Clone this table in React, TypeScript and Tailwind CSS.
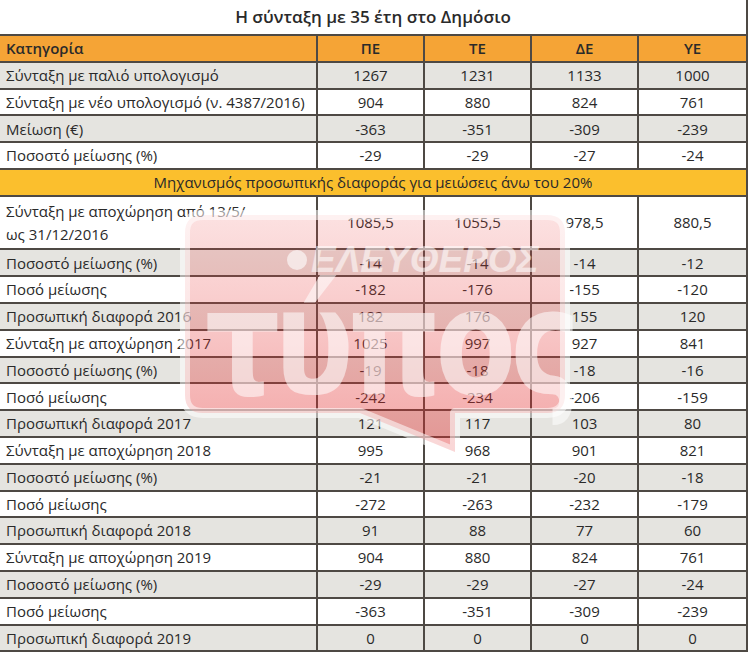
import React from "react"

type Row = {
  label: React.ReactNode
  values: string[]
  gray?: boolean
  tall?: boolean
}

const top: Row[] = [
  { label: "Σύνταξη με παλιό υπολογισμό", values: ["1267", "1231", "1133", "1000"], gray: true },
  { label: "Σύνταξη με νέο υπολογισμό (ν. 4387/2016)", values: ["904", "880", "824", "761"] },
  { label: "Μείωση (€)", values: ["-363", "-351", "-309", "-239"], gray: true },
  { label: "Ποσοστό μείωσης (%)", values: ["-29", "-29", "-27", "-24"] },
]

const bottom: Row[] = [
  {
    label: (
      <>
        Σύνταξη με αποχώρηση από 13/5/
        <br />
        ως 31/12/2016
      </>
    ),
    values: ["1085,5", "1055,5", "978,5", "880,5"],
    tall: true,
  },
  { label: "Ποσοστό μείωσης (%)", values: ["-14", "-14", "-14", "-12"], gray: true },
  { label: "Ποσό μείωσης", values: ["-182", "-176", "-155", "-120"] },
  { label: "Προσωπική διαφορά 2016", values: ["182", "176", "155", "120"], gray: true },
  { label: "Σύνταξη με αποχώρηση 2017", values: ["1025", "997", "927", "841"] },
  { label: "Ποσοστό μείωσης (%)", values: ["-19", "-18", "-18", "-16"], gray: true },
  { label: "Ποσό μείωσης", values: ["-242", "-234", "-206", "-159"] },
  { label: "Προσωπική διαφορά 2017", values: ["121", "117", "103", "80"], gray: true },
  { label: "Σύνταξη με αποχώρηση 2018", values: ["995", "968", "901", "821"] },
  { label: "Ποσοστό μείωσης (%)", values: ["-21", "-21", "-20", "-18"], gray: true },
  { label: "Ποσό μείωσης", values: ["-272", "-263", "-232", "-179"] },
  { label: "Προσωπική διαφορά 2018", values: ["91", "88", "77", "60"], gray: true },
  { label: "Σύνταξη με αποχώρηση 2019", values: ["904", "880", "824", "761"] },
  { label: "Ποσοστό μείωσης (%)", values: ["-29", "-29", "-27", "-24"], gray: true },
  { label: "Ποσό μείωσης", values: ["-363", "-351", "-309", "-239"] },
  { label: "Προσωπική διαφορά 2019", values: ["0", "0", "0", "0"], gray: true },
]

function DataRow({ row }: { row: Row }) {
  return (
    <div
      className={`grid grid-cols-[318px_107px_107px_107px_1fr] border-b-2 border-[#4e4944] ${
        row.tall ? "h-[53.6px]" : "h-[26.8px]"
      } ${row.gray ? "bg-[#e5e4e0]" : "bg-white"}`}
    >
      <div
        className={`border-r-2 border-[#4e4944] pl-[6px] ${
          row.tall ? "pt-[3px] leading-[23px]" : "flex items-center"
        }`}
      >
        {row.label}
      </div>
      {row.values.map((v, i) => (
        <div
          key={i}
          className={`flex items-center justify-center ${
            i < 3 ? "border-r-2 border-[#4e4944]" : ""
          }`}
        >
          {v}
        </div>
      ))}
    </div>
  )
}

// newspaper watermark lying over the table
function Watermark() {
  return (
    <div className="pointer-events-none absolute left-[175px] top-[205px] h-[260px] w-[400px]">
      <svg width="400" height="260" viewBox="0 0 400 260" className="absolute inset-0">
        <defs>
          <linearGradient id="wm" x1="0" y1="0" x2="0" y2="1">
            <stop offset="0" stopColor="#ec4444" stopOpacity="0.16" />
            <stop offset="1" stopColor="#e02828" stopOpacity="0.42" />
          </linearGradient>
        </defs>
        <path
          d="M28 10 H372 Q390 10 390 28 V190 Q390 208 372 208 H280 V247 L185 208 H28 Q10 208 10 190 V28 Q10 10 28 10 Z"
          fill="url(#wm)"
          stroke="#ffffff"
          strokeOpacity="0.55"
          strokeWidth="10"
          strokeLinejoin="round"
        />
      </svg>
      <div className="absolute left-[112px] top-[45px] h-[20px] w-[20px] rounded-full bg-white/60" />
      <div className="absolute left-[136px] top-[34px] font-['Liberation_Sans',sans-serif] text-[37px] font-bold italic leading-[42px] tracking-[0px] text-white/55">
        ΕΛΕΥΘΕΡΟΣ
      </div>
      <div className="absolute left-[30px] top-[64px] origin-top-left scale-y-[1.25] font-['DejaVu_Sans',sans-serif] text-[118px] font-bold leading-[118px] tracking-[-6px] text-white/55">
        τύπος
      </div>
    </div>
  )
}

export default function App() {
  return (
    <div className="relative h-[661px] w-[750px] overflow-hidden bg-white font-['Open_Sans',sans-serif] text-[15px] text-[#2a2a2a]">
      <div className="w-[748px] border-r-2 border-[#4e4944]">
        <div className="flex h-[36px] items-center justify-center border-b-2 border-[#4e4944] text-[17px] font-semibold">
          Η σύνταξη με 35 έτη στο Δημόσιο
        </div>
        <div className="grid h-[26.8px] grid-cols-[318px_107px_107px_107px_1fr] border-b-2 border-[#4e4944] bg-[#f5a436] font-semibold">
          <div className="flex items-center border-r-2 border-[#4e4944] pl-[6px]">Κατηγορία</div>
          <div className="flex items-center justify-center border-r-2 border-[#4e4944]">ΠΕ</div>
          <div className="flex items-center justify-center border-r-2 border-[#4e4944]">ΤΕ</div>
          <div className="flex items-center justify-center border-r-2 border-[#4e4944]">ΔΕ</div>
          <div className="flex items-center justify-center">ΥΕ</div>
        </div>
        {top.map((r, i) => (
          <DataRow key={i} row={r} />
        ))}
        <div className="flex h-[26.8px] items-center justify-center border-b-2 border-[#4e4944] bg-[#fbbf2d]">
          Μηχανισμός προσωπικής διαφοράς για μειώσεις άνω του 20%
        </div>
        {bottom.map((r, i) => (
          <DataRow key={i} row={r} />
        ))}
      </div>
      <Watermark />
    </div>
  )
}
